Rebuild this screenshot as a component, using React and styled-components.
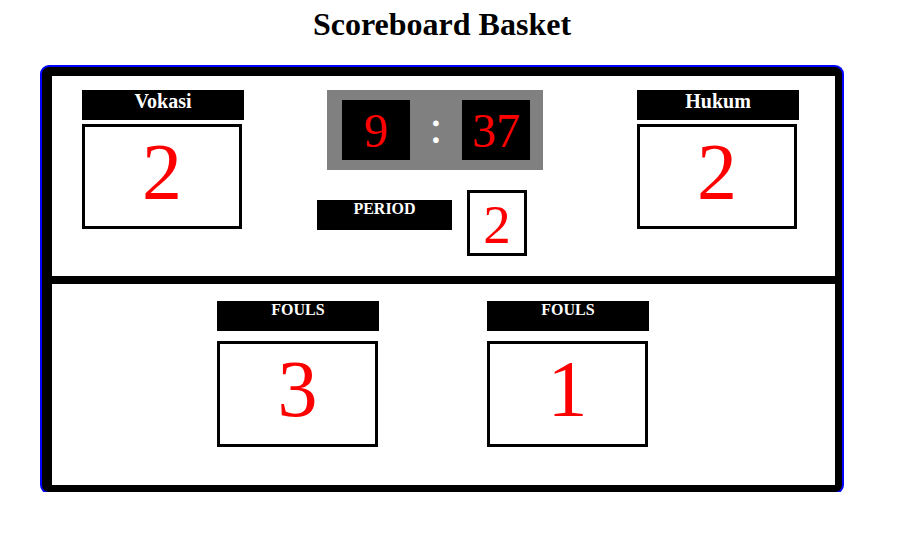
import React from 'react';
import styled, { createGlobalStyle } from 'styled-components';

const GlobalStyle = createGlobalStyle`
  body {
    margin: 0;
    background: #ffffff;
    font-family: "Liberation Serif", "Times New Roman", serif;
  }
`;

const App = () => {
  const game = {
    home: { name: 'Vokasi', score: 2, fouls: 3 },
    away: { name: 'Hukum', score: 2, fouls: 1 },
    minutes: 9,
    seconds: 37,
    period: 2
  };

  return (
    <Page>
      <GlobalStyle />
      <Title>Scoreboard Basket</Title>

      <Board>
        <TopSection>
          <Team>
            <Label size={20}>{game.home.name}</Label>
            <ScoreBox>{game.home.score}</ScoreBox>
          </Team>

          <Center>
            <Clock>
              <ClockDigit>{game.minutes}</ClockDigit>
              <Colon>:</Colon>
              <ClockDigit>{game.seconds}</ClockDigit>
            </Clock>

            <PeriodRow>
              <PeriodLabel>PERIOD</PeriodLabel>
              <PeriodBox>{game.period}</PeriodBox>
            </PeriodRow>
          </Center>

          <Team gap={94}>
            <Label size={20}>{game.away.name}</Label>
            <ScoreBox>{game.away.score}</ScoreBox>
          </Team>
        </TopSection>

        <BottomSection>
          <Team>
            <Label size={16}>FOULS</Label>
            <FoulBox>{game.home.fouls}</FoulBox>
          </Team>
          <Team>
            <Label size={16}>FOULS</Label>
            <FoulBox>{game.away.fouls}</FoulBox>
          </Team>
        </BottomSection>
      </Board>
    </Page>
  );
};

const Page = styled.div`
  width: 800px;
  margin-left: 42px;
  font-family: "Liberation Serif", "Times New Roman", serif;
`;

const Title = styled.h1`
  margin: 0 0 24px;
  padding-top: 6px;
  font-size: 32px;
  font-weight: bold;
  text-align: center;
  color: #000;
`;

const Board = styled.div`
  box-sizing: border-box;
  width: 800px;
  border-style: solid;
  border-color: #000;
  border-width: 9px 7px 7px 10px;
  border-radius: 7px;
  box-shadow: 0 0 0 2px #0000ff;
  background: #fff;
`;

const TopSection = styled.div`
  display: flex;
  align-items: flex-start;
  height: 208px;
  box-sizing: border-box;
  padding: 14px 0 0 30px;
  border-bottom: 8px solid #000;
`;

const BottomSection = styled.div`
  display: flex;
  align-items: flex-start;
  gap: 108px;
  height: 201px;
  box-sizing: border-box;
  padding: 17px 0 0 165px;
`;

const Team = styled.div`
  display: flex;
  flex-direction: column;
  width: 162px;
  margin-left: ${props => props.gap || 0}px;
`;

const Label = styled.div`
  height: 30px;
  background: #000;
  color: #fff;
  font-weight: bold;
  font-size: ${props => props.size}px;
  text-align: center;
`;

const ScoreBox = styled.div`
  box-sizing: border-box;
  width: 160px;
  height: 105px;
  margin-top: 4px;
  border: 3px solid #000;
  color: #ff0000;
  font-family: "Liberation Serif", "Times New Roman", serif;
  font-size: 80px;
  text-align: center;
`;

const FoulBox = styled(ScoreBox)`
  width: 161px;
  height: 106px;
  margin-top: 10px;
`;

const Center = styled.div`
  display: flex;
  flex-direction: column;
  width: 226px;
  margin-left: 73px;
`;

const Clock = styled.div`
  display: flex;
  align-items: center;
  box-sizing: border-box;
  width: 216px;
  height: 80px;
  margin-left: 10px;
  padding: 10px 13px 10px 15px;
  background: #808080;
`;

const ClockDigit = styled.div`
  display: flex;
  align-items: center;
  justify-content: center;
  width: 68px;
  height: 60px;
  background: #000;
  color: #ff0000;
  font-family: "Liberation Serif", "Times New Roman", serif;
  font-size: 48px;
`;

const Colon = styled.div`
  flex: 1;
  text-align: center;
  color: #fff;
  font-size: 48px;
  line-height: 1;
  margin-top: -6px;
`;

const PeriodRow = styled.div`
  display: flex;
  align-items: flex-start;
  margin-top: 20px;
`;

const PeriodLabel = styled.div`
  width: 135px;
  height: 30px;
  margin-top: 10px;
  background: #000;
  color: #fff;
  font-weight: bold;
  font-size: 16px;
  text-align: center;
`;

const PeriodBox = styled.div`
  box-sizing: border-box;
  width: 60px;
  height: 66px;
  margin-left: 15px;
  border: 3px solid #000;
  color: #ff0000;
  font-family: "Liberation Serif", "Times New Roman", serif;
  font-size: 55px;
  text-align: center;
`;

export default App;
